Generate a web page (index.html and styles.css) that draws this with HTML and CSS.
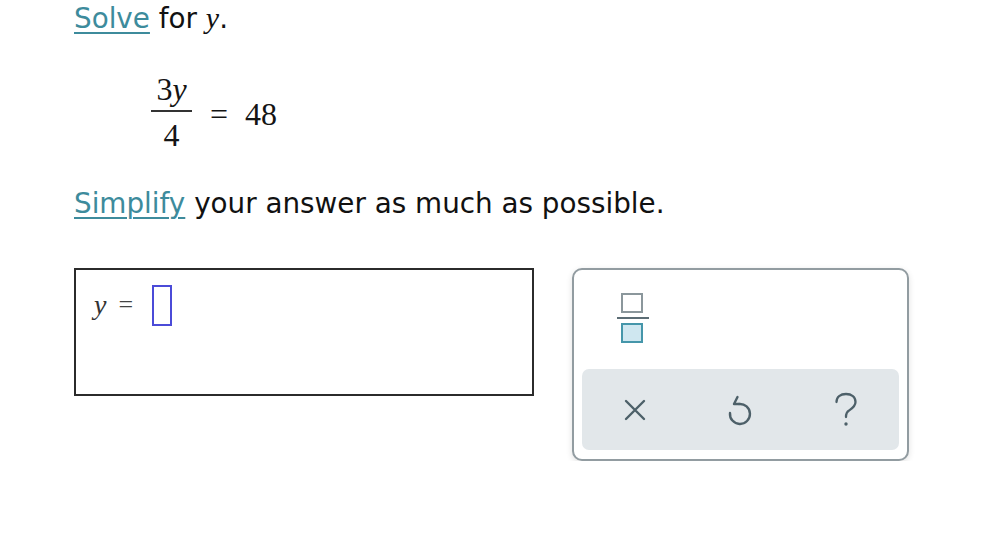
FILE: index.html
```html
<!DOCTYPE html>
<html lang="en">
<head>
<meta charset="utf-8">
<title>Solve for y</title>
<link rel="stylesheet" href="styles.css">
</head>
<body>
<main class="page">
  <p class="line line-first"><a class="link" href="#">Solve</a> for <span class="mvar">y</span>.</p>

  <div class="equation">
    <span class="frac">
      <span class="num">3<span class="mvar">y</span></span>
      <span class="bar"></span>
      <span class="den">4</span>
    </span>
    <span class="eq">=</span>
    <span class="rhs">48</span>
  </div>

  <p class="line line-second"><a class="link" href="#">Simplify</a> your answer as much as possible.</p>

  <div class="work">
    <div class="answer">
      <span class="ans-var">y</span>
      <span class="ans-eq">=</span>
      <span class="slot"></span>
    </div>

    <div class="keypad">
      <div class="keys">
        <button class="key-frac" type="button" aria-label="fraction">
          <svg width="32" height="50" viewBox="0 0 32 50">
            <rect x="5" y="1" width="20" height="18" fill="#fff" stroke="#8b979c" stroke-width="2"/>
            <rect x="0" y="24" width="32" height="2" fill="#5c6d75"/>
            <rect x="5" y="31" width="20" height="18" fill="#cfe7f0" stroke="#4596aa" stroke-width="2"/>
          </svg>
        </button>
      </div>
      <div class="tools">
        <button class="tool" type="button" aria-label="clear">
          <svg width="22" height="22" viewBox="0 0 22 22">
            <path d="M2 2 L20 20 M20 2 L2 20" stroke="#4d6069" stroke-width="2.4" fill="none" stroke-linecap="round"/>
          </svg>
        </button>
        <button class="tool" type="button" aria-label="undo">
          <svg width="26" height="32" viewBox="0 0 26 32">
            <path d="M12 10 A10 10 0 1 1 3 19" stroke="#4d6069" stroke-width="2.4" fill="none" stroke-linecap="round"/>
            <path d="M12 10 L7 10 L10.5 3" stroke="#4d6069" stroke-width="2.4" fill="none" stroke-linecap="round" stroke-linejoin="round"/>
          </svg>
        </button>
        <button class="tool" type="button" aria-label="help">
          <svg width="26" height="36" viewBox="0 0 26 36">
            <path d="M3.5 10 C3.5 5 7.5 2 13 2 C18.5 2 22.5 5 22.5 10 C22.5 14.5 19 16.5 16 18.5 C13.5 20 13 21.5 13 25" stroke="#4d6069" stroke-width="2.3" fill="none" stroke-linecap="round"/>
            <circle cx="13" cy="32" r="1.7" fill="#4d6069"/>
          </svg>
        </button>
      </div>
    </div>
  </div>
</main>
</body>
</html>
```

FILE: styles.css
```css
html, body {
  margin: 0;
  padding: 0;
  background: #ffffff;
}

.page {
  padding-left: 74px;
  font-family: "DejaVu Sans", Verdana, sans-serif;
  color: #111111;
}

.line {
  margin: 0;
  font-size: 27.8px;
  line-height: 34px;
  height: 34px;
  white-space: nowrap;
}

.line-first {
  padding-top: 1px;
}

.line-second {
  margin-top: 36px;
}

.link {
  color: #3d8b9c;
  text-decoration: underline;
  text-decoration-thickness: 2px;
  text-underline-offset: 4px;
}

.mvar {
  font-family: "Liberation Serif", "Times New Roman", serif;
  font-style: italic;
  font-size: 30px;
}

.equation {
  margin-top: 38px;
  margin-left: 77px;
  display: flex;
  align-items: center;
  font-family: "Liberation Serif", "Times New Roman", serif;
  font-size: 32px;
  color: #141414;
  height: 78px;
}

.frac {
  display: inline-flex;
  flex-direction: column;
  align-items: center;
  width: 41px;
}

.num, .den {
  line-height: 32px;
  height: 32px;
}

.num .mvar {
  font-size: 32px;
}

.bar {
  display: block;
  width: 41px;
  height: 2px;
  background: #333;
  margin: 5px 0 7px;
}

.eq {
  margin-left: 18px;
  line-height: 32px;
  padding-top: 3px;
}

.rhs {
  margin-left: 17px;
  line-height: 32px;
  padding-top: 3px;
}

.work {
  margin-top: 47px;
  display: flex;
  align-items: flex-start;
  gap: 38px;
}

.answer {
  box-sizing: border-box;
  width: 460px;
  height: 128px;
  border: 2px solid #2b2b2b;
  padding: 15px 0 0 18px;
  display: flex;
  align-items: flex-start;
  font-family: "Liberation Serif", "Times New Roman", serif;
  color: #333;
}

.ans-var {
  font-style: italic;
  font-size: 28px;
  line-height: 40px;
}

.ans-eq {
  font-size: 26px;
  line-height: 40px;
  margin-left: 12px;
  color: #444;
}

.slot {
  box-sizing: border-box;
  width: 20px;
  height: 41px;
  border: 2px solid #4b4bd8;
  margin-left: 19px;
}

.keypad {
  box-sizing: border-box;
  width: 337px;
  height: 193px;
  border: 2px solid #929ca1;
  border-radius: 10px;
  background: #fff;
  box-shadow: 0 2px 6px rgba(0, 0, 0, 0.12);
  padding: 0 8px 9px 8px;
  display: flex;
  flex-direction: column;
}

.keys {
  height: 99px;
  display: flex;
  align-items: flex-start;
}

.key-frac {
  margin: 23px 0 0 35px;
  padding: 0;
  border: 0;
  background: transparent;
  display: block;
  line-height: 0;
}

.tools {
  flex: 1;
  display: grid;
  grid-template-columns: repeat(3, 1fr);
  align-items: center;
  justify-items: center;
  background: #e2e7ea;
  border-radius: 7px;
}

.tool {
  padding: 0;
  border: 0;
  background: transparent;
  line-height: 0;
  display: flex;
  align-items: center;
  justify-content: center;
}
```
